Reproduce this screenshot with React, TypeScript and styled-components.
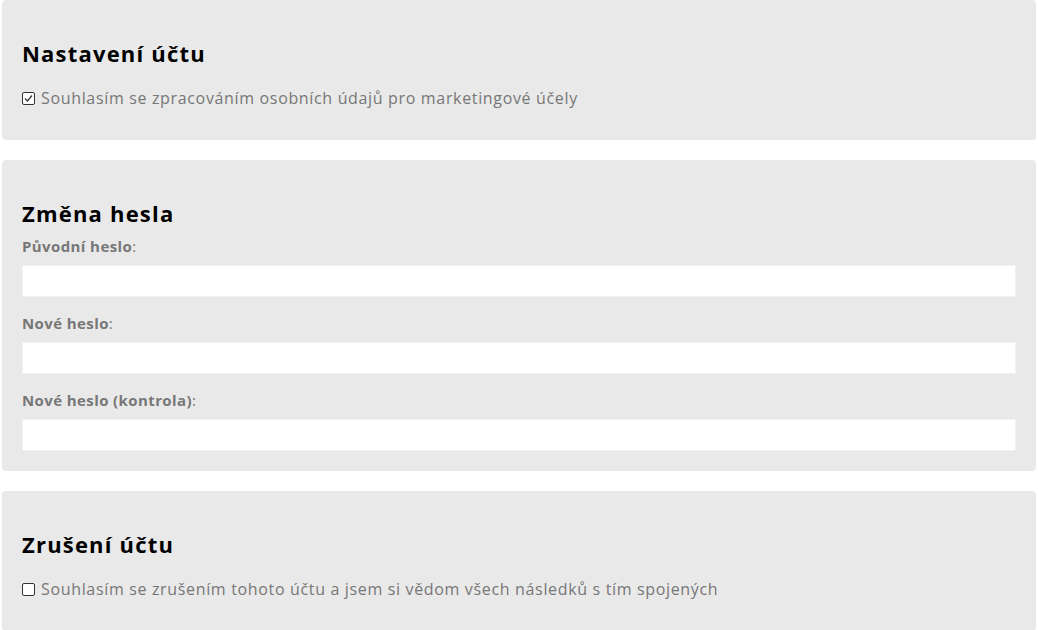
import React from "react";
import styled, { createGlobalStyle } from "styled-components";

const GlobalStyle = createGlobalStyle`
  html, body { margin: 0; padding: 0; background: #ffffff; }
  body { font-family: "Open Sans", "Noto Sans", sans-serif; }
  * { box-sizing: border-box; }
`;

const Page = styled.div`
  display: flex;
  flex-direction: column;
  gap: 20px;
  padding: 0 2px;
`;

const Card = styled.section`
  background: #e9e9e9;
  border-radius: 4px;
  padding: 20px 20px 20px;
`;

const Heading = styled.h2`
  margin: 15px 0 0;
  font-size: 22px;
  line-height: 36px;
  font-weight: 700;
  letter-spacing: 1.2px;
  color: #000;
`;

const CheckRow = styled.label`
  display: flex;
  align-items: center;
  gap: 6px;
  margin: 15px 0 10px;
  font-size: 16px;
  line-height: 24px;
  letter-spacing: 0.66px;
  color: #777;
`;

const Box = styled.span`
  width: 13px;
  height: 13px;
  border: 1px solid #333;
  border-radius: 2px;
  background: #fff;
  display: flex;
  align-items: center;
  justify-content: center;
  flex: none;
`;

const Field = styled.div<{ $first?: boolean }>`
  display: flex;
  flex-direction: column;
  margin-top: ${(p) => (p.$first ? "3px" : "14px")};
`;

const Label = styled.label`
  font-size: 15px;
  line-height: 24px;
  letter-spacing: 0.4px;
  color: #777;
  margin-bottom: 7px;
  strong { font-weight: 700; }
`;

const Input = styled.input`
  height: 32px;
  width: 100%;
  border: 1px solid #f2f2f2;
  background: #fff;
  outline: none;
  padding: 0 8px;
`;

const Checkbox = ({ checked }: { checked?: boolean }) => (
  <Box>
    {checked && (
      <svg width="9" height="9" viewBox="0 0 9 9">
        <path d="M1 4.5 L3.5 7 L8 1.5" fill="none" stroke="#333" strokeWidth="1.2" />
      </svg>
    )}
  </Box>
);

export default function App() {
  return (
    <>
      <GlobalStyle />
      <Page>
        <Card>
          <Heading>Nastavení účtu</Heading>
          <CheckRow>
            <Checkbox checked />
            Souhlasím se zpracováním osobních údajů pro marketingové účely
          </CheckRow>
        </Card>
        <Card>
          <Heading>Změna hesla</Heading>
          <Field $first>
            <Label><strong>Původní heslo</strong>:</Label>
            <Input type="password" />
          </Field>
          <Field>
            <Label><strong>Nové heslo</strong>:</Label>
            <Input type="password" />
          </Field>
          <Field>
            <Label><strong>Nové heslo (kontrola)</strong>:</Label>
            <Input type="password" />
          </Field>
        </Card>
        <Card>
          <Heading>Zrušení účtu</Heading>
          <CheckRow>
            <Checkbox />
            Souhlasím se zrušením tohoto účtu a jsem si vědom všech následků s tím spojených
          </CheckRow>
        </Card>
      </Page>
    </>
  );
}
